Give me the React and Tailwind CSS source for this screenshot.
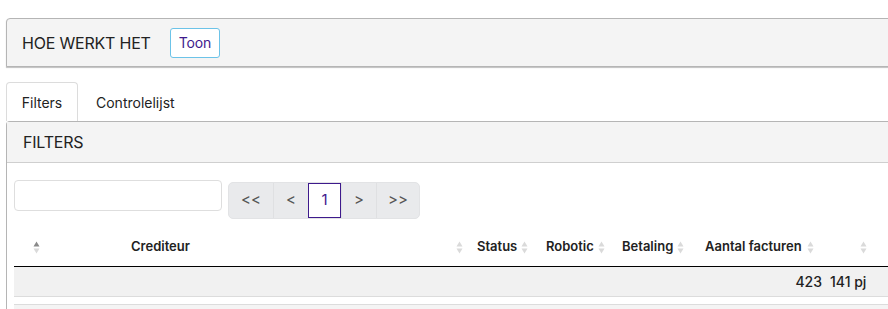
import React from "react";

function SortIcon({ active = false }) {
  return (
    <svg width="7" height="13" viewBox="0 0 7 13" className="shrink-0">
      <path d="M3.5 0.5 L6.5 5.5 L0.5 5.5 Z" fill={active ? "#8a8a8a" : "#dadada"} />
      <path d="M3.5 12.5 L6.5 7.5 L0.5 7.5 Z" fill="#dadada" />
    </svg>
  );
}

const PAGES = [
  { label: "<<", w: "w-[44px]" },
  { label: "<", w: "w-[35px]" },
  { label: "1", w: "w-[33px]", active: true },
  { label: ">", w: "w-[35px]" },
  { label: ">>", w: "w-[43px]" },
];

export default function App() {
  return (
    <div className="w-[888px] h-[309px] overflow-hidden bg-white text-[#222] font-['Inter','Liberation_Sans',sans-serif]">
      <div className="pl-[6px] pt-[18px] mr-[-20px]">
        {/* How it works */}
        <div className="h-[49px] flex items-center bg-[#f4f4f4] border border-[#b5b5b5] rounded-tl-[4px] shadow-[0_1px_1px_rgba(0,0,0,0.25)] pl-[15px]">
          <span className="text-[16px] tracking-[-0.2px]">HOE WERKT HET</span>
          <button className="ml-[19px] h-[30px] px-[8px] rounded-[3px] border border-[#6cc3e8] bg-white text-[14px] tracking-[-0.2px] text-[#3e1a8c]">
            Toon
          </button>
        </div>

        {/* Tabs */}
        <div className="mt-[16px] flex items-end h-[38px]">
          <div className="h-[39px] w-[72px] flex items-center justify-center border border-b-0 border-[#dcdcdc] rounded-t-[4px] bg-white text-[14px] relative z-10">
            Filters
          </div>
          <div className="h-[38px] flex items-center pl-[18px] text-[14px]">Controlelijst</div>
        </div>

        {/* Filters panel */}
        <div className="border-l border-t border-[#b5b5b5] rounded-tl-[4px]">
          <div className="h-[41px] flex items-center bg-[#f4f4f4] border-b border-[#cfcfcf] pl-[16px] text-[16px] tracking-[-0.2px]">
            FILTERS
          </div>

          <div className="pl-[7px] pt-[16px]">
            <div className="flex items-start gap-[6px]">
              <input className="mt-[1px] w-[208px] h-[31px] border border-[#dedede] rounded-[4px] bg-white outline-none" />
              <div className="mt-[3px] flex h-[37px] rounded-[5px] bg-[#e9eaec] border border-[#e2e3e5] overflow-hidden">
                {PAGES.map((p, i) => (
                  <div
                    key={i}
                    className={`${p.w} flex items-center justify-center text-[15px] ${
                      p.active
                        ? "bg-white border border-[#3e1a8c] text-[#3e1a8c]"
                        : "text-[#555] border-l border-[#dfe0e2] first:border-l-0"
                    }`}
                  >
                    {p.label}
                  </div>
                ))}
              </div>
            </div>

            {/* Table head */}
            <div className="mt-[9px] flex h-[39px] items-center text-[13px] font-semibold border-b-[1.5px] border-black">
              <div className="w-[106px] flex items-center pl-[19px]">
                <SortIcon active />
              </div>
              <div className="w-[348px] flex items-center pl-[11px] pr-[5px]">
                <span>Crediteur</span>
                <span className="ml-auto"><SortIcon /></span>
              </div>
              <div className="w-[69px] flex items-center gap-[4px] pl-[9px]">
                <span>Status</span>
                <SortIcon />
              </div>
              <div className="w-[77px] flex items-center gap-[4px] pl-[9px]">
                <span>Robotic</span>
                <SortIcon />
              </div>
              <div className="w-[80px] flex items-center gap-[4px] pl-[8px]">
                <span>Betaling</span>
                <SortIcon />
              </div>
              <div className="w-[128px] flex items-center gap-[5px] pl-[11px]">
                <span>Aantal facturen</span>
                <SortIcon />
              </div>
              <div className="w-[50px] flex items-center justify-end pr-[5px]">
                <SortIcon />
              </div>
            </div>

            {/* Footer row */}
            <div className="flex h-[30px] items-center bg-[#f1f1f1] border-b border-[#dcdcdc] text-[14px] font-medium">
              <div className="w-[808px] text-right">423</div>
              <div className="pl-[8px]">141 pj</div>
            </div>
            <div className="h-[8px] bg-white border-b border-[#dcdcdc]"></div>
            <div className="h-[10px] bg-[#f4f4f4]"></div>
          </div>
        </div>
      </div>
    </div>
  );
}
